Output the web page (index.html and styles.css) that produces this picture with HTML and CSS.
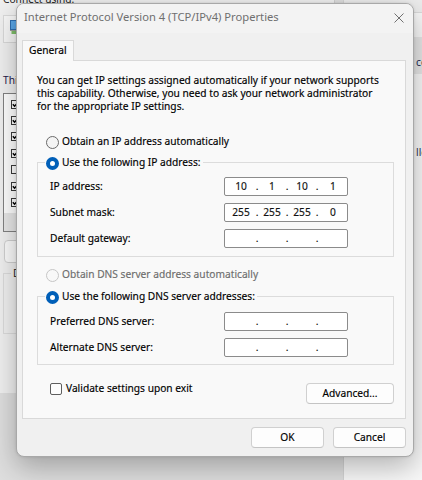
FILE: index.html
```html
<!DOCTYPE html>
<html>
<head>
<meta charset="utf-8">
<title>Internet Protocol Version 4 (TCP/IPv4) Properties</title>
<link rel="stylesheet" href="styles.css">
</head>
<body>
<div class="win-back">
  <div class="cap">Connect using:</div>
  <div class="adapter">
    <svg class="adapter-icon" width="8" height="15" viewBox="0 0 8 15"><rect x="0.5" y="0.5" width="7" height="9" fill="#5aa6e6" stroke="#2f6fb0"/><rect x="1.5" y="11" width="6" height="3" fill="#7fbf6a"/><rect x="0" y="10" width="8" height="1" fill="#9a9a9a"/></svg>
  </div>
  <div class="items-label">This connection uses the following items:</div>
  <div class="itemlist">
    <div class="item"><svg class="cb-small" width="9" height="9" viewBox="0 0 9 9"><rect x="0.5" y="0.5" width="8" height="8" fill="#fff" stroke="#3a3a3a"/><path d="M1.8 4.2L3.6 6.3L7.4 1.9" stroke="#000" stroke-width="1.4" fill="none"/></svg></div>
    <div class="item"><svg class="cb-small" width="9" height="9" viewBox="0 0 9 9"><rect x="0.5" y="0.5" width="8" height="8" fill="#fff" stroke="#3a3a3a"/><path d="M1.8 4.2L3.6 6.3L7.4 1.9" stroke="#000" stroke-width="1.4" fill="none"/></svg></div>
    <div class="item"><svg class="cb-small" width="9" height="9" viewBox="0 0 9 9"><rect x="0.5" y="0.5" width="8" height="8" fill="#fff" stroke="#3a3a3a"/><path d="M1.8 4.2L3.6 6.3L7.4 1.9" stroke="#000" stroke-width="1.4" fill="none"/></svg></div>
    <div class="item"><svg class="cb-small" width="9" height="9" viewBox="0 0 9 9"><rect x="0.5" y="0.5" width="8" height="8" fill="#fff" stroke="#3a3a3a"/><path d="M1.8 4.2L3.6 6.3L7.4 1.9" stroke="#000" stroke-width="1.4" fill="none"/></svg></div>
    <div class="item"><svg class="cb-small" width="9" height="9" viewBox="0 0 9 9"><rect x="0.5" y="0.5" width="8" height="8" fill="#fff" stroke="#3a3a3a"/></svg></div>
    <div class="item"><svg class="cb-small" width="9" height="9" viewBox="0 0 9 9"><rect x="0.5" y="0.5" width="8" height="8" fill="#fff" stroke="#3a3a3a"/><path d="M1.8 4.2L3.6 6.3L7.4 1.9" stroke="#000" stroke-width="1.4" fill="none"/></svg></div>
    <div class="item"><svg class="cb-small" width="9" height="9" viewBox="0 0 9 9"><rect x="0.5" y="0.5" width="8" height="8" fill="#fff" stroke="#3a3a3a"/><path d="M1.8 4.2L3.6 6.3L7.4 1.9" stroke="#000" stroke-width="1.4" fill="none"/></svg></div>
    <div class="hscroll"></div>
  </div>
  <div class="back-btn"></div>
  <fieldset class="back-group"><legend>Description</legend></fieldset>
</div>

<div class="win-right">
  <div class="wr-top"></div>
  <div class="wr-band"><span>connections</span></div>
  <div class="wr-text">ller</div>
</div>

<div class="dialog">
  <div class="titlebar">
    <span class="title">Internet Protocol Version 4 (TCP/IPv4) Properties</span>
    <svg class="close" width="10" height="10" viewBox="0 0 10 10"><path d="M0.5 0.5L9.5 9.5M9.5 0.5L0.5 9.5" stroke="#707070" stroke-width="1" fill="none"/></svg>
  </div>
  <div class="body">
    <div class="tab">General</div>
    <div class="panel">
      <p class="intro">You can get IP settings assigned automatically if your network supports<br>this capability. Otherwise, you need to ask your network administrator<br>for the appropriate IP settings.</p>

      <div class="opt first"><span class="radio"></span><span>Obtain an IP address automatically</span></div>

      <fieldset class="group g1">
        <legend><span class="radio on"></span><span>Use the following IP address:</span></legend>
        <div class="fields">
          <span>IP address:</span>
          <div class="ip"><span>10</span><span>.</span><span>1</span><span>.</span><span>10</span><span>.</span><span>1</span></div>
          <span>Subnet mask:</span>
          <div class="ip"><span>255</span><span>.</span><span>255</span><span>.</span><span>255</span><span>.</span><span>0</span></div>
          <span>Default gateway:</span>
          <div class="ip"><span></span><span>.</span><span></span><span>.</span><span></span><span>.</span><span></span></div>
        </div>
      </fieldset>

      <div class="opt disabled"><span class="radio off"></span><span>Obtain DNS server address automatically</span></div>

      <fieldset class="group g2">
        <legend><span class="radio on"></span><span>Use the following DNS server addresses:</span></legend>
        <div class="fields">
          <span>Preferred DNS server:</span>
          <div class="ip"><span></span><span>.</span><span></span><span>.</span><span></span><span>.</span><span></span></div>
          <span>Alternate DNS server:</span>
          <div class="ip"><span></span><span>.</span><span></span><span>.</span><span></span><span>.</span><span></span></div>
        </div>
      </fieldset>

      <div class="bottom">
        <div class="check"><span class="cbox"></span><span class="check-text">Validate settings upon exit</span></div>
        <div class="btn adv">Advanced...</div>
      </div>
    </div>
    <div class="footer">
      <div class="btn">OK</div>
      <div class="btn">Cancel</div>
    </div>
  </div>
</div>
</body>
</html>
```

FILE: styles.css
```css
* { box-sizing: border-box; }
html, body { margin: 0; padding: 0; }
body {
  width: 422px;
  height: 480px;
  overflow: hidden;
  position: relative;
  background: #dedede;
  font-family: "Noto Sans", "DejaVu Sans", sans-serif;
  font-size: 10.2px;
  line-height: 15px;
  color: #000;
}

/* background window (left) */
.win-back {
  position: absolute;
  left: 0;
  top: -8px;
  width: 335px;
  height: 401px;
  background: #f0f0f0;
  border-right: 1px solid #cfcfcf;
  padding-left: 3px;
  display: flex;
  flex-direction: column;
  align-items: flex-start;
  color: #1b1b1b;
  overflow: hidden;
}
.cap { height: 15px; white-space: nowrap; }
.adapter {
  margin-top: 8px;
  width: 320px;
  height: 28px;
  border: 1px solid #d9d9d9;
  background: #f7f7f7;
  padding: 4px 0 0 6px;
}
.adapter-icon { display: block; }
.items-label { margin-top: 30px; white-space: nowrap; color: #24184a; }
.itemlist {
  margin-top: 5px;
  width: 320px;
  height: 139px;
  border: 1px solid #828282;
  background: #fff;
  padding-top: 2px;
  display: flex;
  flex-direction: column;
}
.item { height: 16.4px; display: flex; align-items: center; padding-left: 7px; flex: none; }
.cb-small { display: block; }
.hscroll { margin-top: 2px; height: 20px; background: #e8e8e8; }
.back-btn {
  margin-top: 8px;
  margin-left: 1px;
  width: 80px;
  height: 23px;
  border: 1px solid #d0d0d0;
  border-radius: 4px;
  background: #fbfbfb;
}
.back-group {
  margin: 3px 0 0 0;
  padding: 0;
  width: 320px;
  height: 68px;
  border: 1px solid #dcdcdc;
  min-width: 0;
}
.back-group legend { margin-left: 7px; padding: 0 2px; line-height: 15px; }

/* background window (right) */
.win-right {
  position: absolute;
  left: 343px;
  top: 0;
  width: 120px;
  height: 480px;
  background: #f8f8f8;
  border-left: 1px solid #d4d4d4;
  display: flex;
  flex-direction: column;
  color: #1c2a55;
}
.wr-top { height: 13px; background: #ececec; border-bottom: 1px solid #dadada; }
.wr-band { margin-top: 24px; height: 37px; background: #e6e6e6; padding: 18px 0 0 72px; white-space: nowrap; }
.wr-text { margin-top: 71px; padding-left: 72px; white-space: nowrap; color: #2b3552; }

/* dialog */
.dialog {
  position: absolute;
  left: 16px;
  top: 3px;
  width: 398px;
  height: 454px;
  border: 1px solid #a8a8a8;
  border-radius: 8px;
  background: #f0f0f0;
  box-shadow: 0 10px 28px rgba(0, 0, 0, 0.28), 0 0 3px rgba(0, 0, 0, 0.12);
  display: flex;
  flex-direction: column;
  overflow: hidden;
}
.titlebar {
  height: 29px;
  flex: none;
  background: #f3f3f3;
  display: flex;
  justify-content: space-between;
  align-items: flex-start;
  padding: 5px 9px 0 7px;
}
.title { color: #6f6f6f; white-space: nowrap; font-size: 11.2px; }
.close { margin-top: 4px; display: block; }

.body {
  flex: 1;
  display: flex;
  flex-direction: column;
  align-items: stretch;
  padding: 7px 7px 8px 5px;
  -webkit-text-stroke: 0.15px currentColor;
}
.tab {
  align-self: flex-start;
  width: 52px;
  height: 21px;
  margin-bottom: -1px;
  border: 1px solid #d9d9d9;
  border-bottom: none;
  background: #f9f9f9;
  padding: 2px 0 0 6px;
  position: relative;
  z-index: 1;
  white-space: nowrap;
}
.panel {
  height: 359px;
  border: 1px solid #d9d9d9;
  background: #f9f9f9;
  padding: 13px 11px 0 14px;
  display: flex;
  flex-direction: column;
}
.intro { margin: 0; line-height: 13px; white-space: nowrap; }

.opt { display: flex; align-items: flex-start; margin-left: 9px; white-space: nowrap; }
.opt.first { margin-top: 21px; }
.opt.disabled { margin-top: 10px; color: #6d6d6d; }

.radio {
  width: 13px;
  height: 13px;
  flex: none;
  border-radius: 50%;
  border: 1px solid #6a6a6a;
  background: #f4f4f4;
  margin-top: 2px;
  margin-right: 3px;
}
.radio.on { border: 4px solid #005fb8; background: #fff; }
.radio.off { border-color: #c6c6c6; background: #f8f8f8; }

.group {
  margin: 6px 0 0 0;
  padding: 0;
  border: 1px solid #dcdcdc;
  min-width: 0;
}
.group.g2 { margin-top: 7px; }
.group legend {
  margin-left: 7px;
  padding: 0 2px 0 1px;
  display: flex;
  align-items: flex-start;
  white-space: nowrap;
  line-height: 15px;
}
.fields {
  display: grid;
  grid-template-columns: 174px 124px;
  grid-auto-rows: 26px;
  align-items: center;
  padding: 3px 12px 5px 12px;
  white-space: nowrap;
}
.g2 .fields { padding: 4px 12px 4px 12px; }
.ip {
  height: 19px;
  border: 1px solid #8b8b8b;
  border-radius: 2px;
  background: #fff;
  display: grid;
  grid-template-columns: 28px 4px 26px 4px 26px 4px 28px;
  padding-left: 2px;
  align-items: center;
  text-align: center;
  color: #111;
}

.bottom {
  display: flex;
  justify-content: space-between;
  align-items: flex-start;
  margin-top: 18px;
}
.check { display: flex; align-items: flex-start; margin-left: 13px; white-space: nowrap; }
.cbox {
  width: 12px;
  height: 12px;
  flex: none;
  border: 1px solid #5e5e5e;
  border-radius: 2px;
  background: #fdfdfd;
  margin-right: 4px;
}
.check-text { margin-top: -2px; }

.btn {
  height: 21px;
  border: 1px solid #d0d0d0;
  border-bottom-color: #c4c4c4;
  border-radius: 4px;
  background: #fdfdfd;
  display: flex;
  align-items: center;
  justify-content: center;
  white-space: nowrap;
  color: #000;
}
.adv { width: 88px; }
.footer {
  display: flex;
  justify-content: flex-end;
  gap: 9px;
  margin-top: 8px;
}
.footer .btn { width: 73px; }
```
